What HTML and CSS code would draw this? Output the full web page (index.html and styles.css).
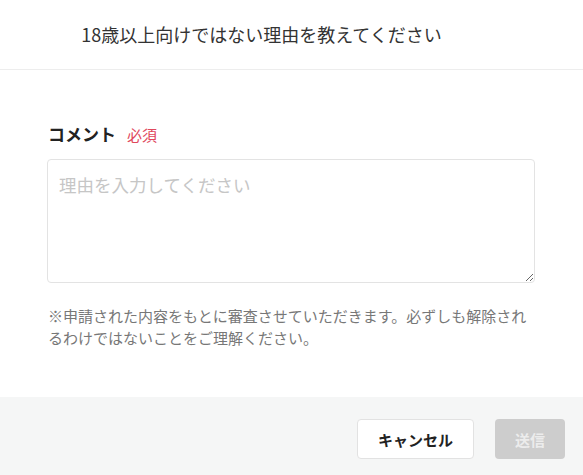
FILE: index.html
```html
<!DOCTYPE html>
<html lang="ja">
<head>
<meta charset="utf-8">
<title>理由</title>
<link rel="stylesheet" href="styles.css">
</head>
<body>
<div class="modal">
  <header class="modal-header">
    <h1 class="modal-title">18歳以上向けではない理由を教えてください</h1>
  </header>
  <main class="modal-body">
    <div class="field-label">
      <span class="label-text">コメント</span>
      <span class="required">必須</span>
    </div>
    <textarea class="comment" placeholder="理由を入力してください"></textarea>
    <p class="note">※申請された内容をもとに審査させていただきます。必ずしも解除されるわけではないことをご理解ください。</p>
  </main>
  <footer class="modal-footer">
    <button class="btn btn-cancel" type="button">キャンセル</button>
    <button class="btn btn-submit" type="button" disabled>送信</button>
  </footer>
</div>
</body>
</html>
```

FILE: styles.css
```css
* { box-sizing: border-box; }
html, body {
  margin: 0;
  padding: 0;
  background: #ffffff;
}
body {
  font-family: "Noto Sans CJK JP", "Noto Sans", sans-serif;
  color: #333;
}
.modal {
  width: 583px;
  height: 475px;
  display: flex;
  flex-direction: column;
}
.modal-header {
  height: 70px;
  border-bottom: 1px solid #ededed;
  display: flex;
  align-items: center;
  justify-content: center;
  padding: 0 60px 1px 0;
}
.modal-title {
  margin: 0;
  font-size: 18px;
  font-weight: 400;
  color: #333;
  line-height: 24px;
}
.modal-body {
  flex: 1;
  padding: 52px 48px 0 47px;
}
.field-label {
  display: flex;
  align-items: baseline;
  gap: 11px;
  line-height: 24px;
  margin-bottom: 12px;
  padding-left: 1px;
}
.label-text {
  font-size: 17px;
  font-weight: 700;
  color: #222;
}
.required {
  font-size: 15px;
  color: #e0485c;
}
.comment {
  display: block;
  width: 488px;
  height: 124px;
  border: 1px solid #e3e3e3;
  border-radius: 4px;
  padding: 11px 11px;
  font-family: "Noto Sans CJK JP", "Noto Sans", sans-serif;
  font-size: 17.5px;
  line-height: 27px;
  color: #333;
  resize: vertical;
  outline: none;
  margin: 0;
}
.comment::placeholder {
  color: #c6c6c6;
}
.note {
  margin: 22px 0 0;
  padding-left: 1px;
  font-size: 15px;
  line-height: 22px;
  color: #777;
}
.modal-footer {
  height: 78px;
  background: #f5f6f6;
  display: flex;
  justify-content: flex-end;
  align-items: flex-start;
  gap: 21px;
  padding: 22px 18px 0 0;
}
.btn {
  height: 40px;
  border-radius: 4px;
  font-family: "Noto Sans CJK JP", "Noto Sans", sans-serif;
  font-size: 15px;
  font-weight: 700;
  line-height: 1;
  padding: 0;
}
.btn-cancel {
  width: 117px;
  background: #fff;
  border: 1px solid #e2e2e2;
  color: #222;
}
.btn-submit {
  width: 70px;
  background: #cdcdcd;
  border: none;
  color: #ececec;
}
```
